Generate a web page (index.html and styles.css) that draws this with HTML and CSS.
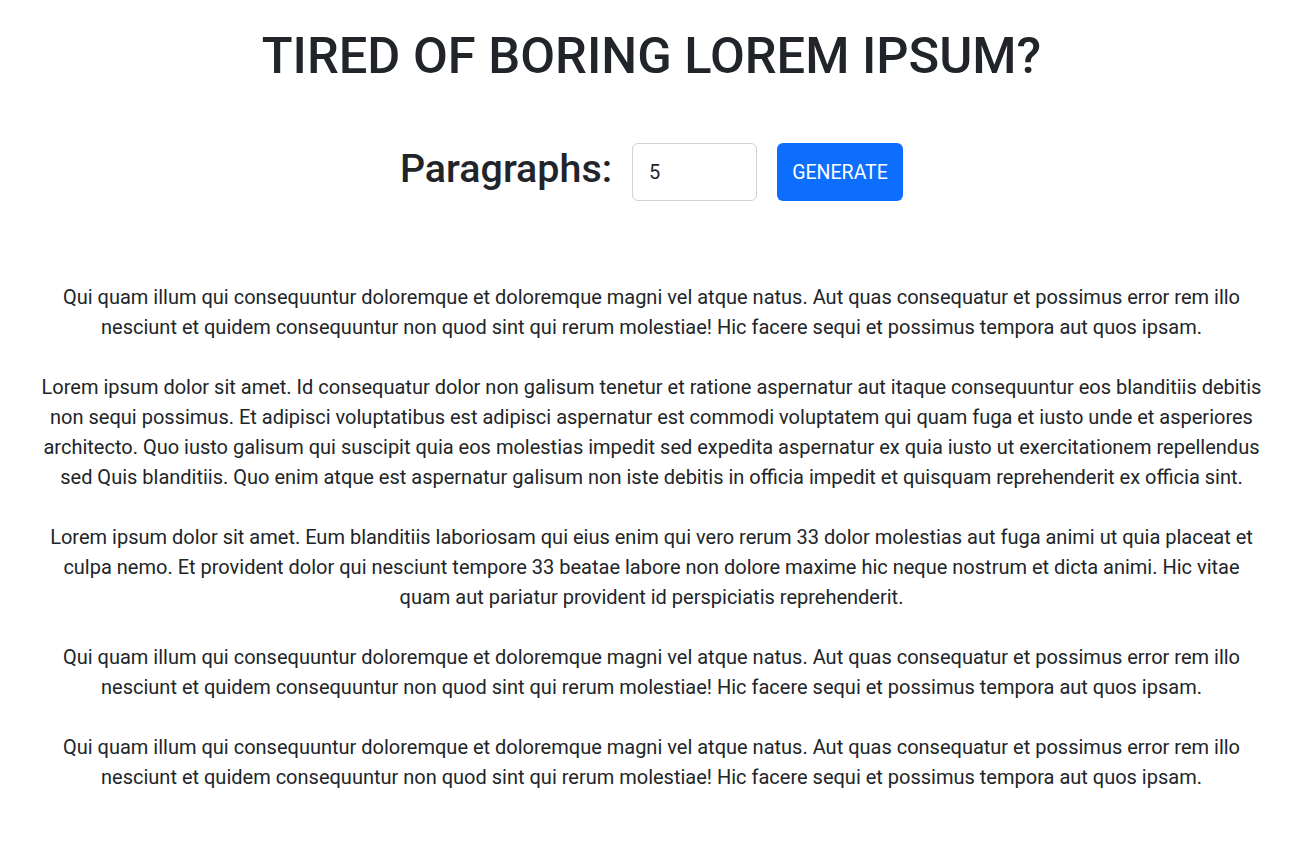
FILE: index.html
```html
<!DOCTYPE html>
<html lang="en">
<head>
<meta charset="utf-8">
<title>Lorem Ipsum Generator</title>
<link rel="stylesheet" href="styles.css">
</head>
<body>
<main class="page">
  <h1 class="title">TIRED OF BORING LOREM IPSUM?</h1>
  <form class="controls">
    <label class="controls-label" for="amount">Paragraphs:</label>
    <input class="amount-input" type="number" id="amount" name="amount" value="5">
    <button class="generate-btn" type="button">GENERATE</button>
  </form>
  <article class="lorem">
    <p>Qui quam illum qui consequuntur doloremque et doloremque magni vel atque natus. Aut quas consequatur et possimus error rem illo nesciunt et quidem consequuntur non quod sint qui rerum molestiae! Hic facere sequi et possimus tempora aut quos ipsam.</p>
    <p>Lorem ipsum dolor sit amet. Id consequatur dolor non galisum tenetur et ratione aspernatur aut itaque consequuntur eos blanditiis debitis non sequi possimus. Et adipisci voluptatibus est adipisci aspernatur est commodi voluptatem qui quam fuga et iusto unde et asperiores architecto. Quo iusto galisum qui suscipit quia eos molestias impedit sed expedita aspernatur ex quia iusto ut exercitationem repellendus sed Quis blanditiis. Quo enim atque est aspernatur galisum non iste debitis in officia impedit et quisquam reprehenderit ex officia sint.</p>
    <p>Lorem ipsum dolor sit amet. Eum blanditiis laboriosam qui eius enim qui vero rerum 33 dolor molestias aut fuga animi ut quia placeat et culpa nemo. Et provident dolor qui nesciunt tempore 33 beatae labore non dolore maxime hic neque nostrum et dicta animi. Hic vitae quam aut pariatur provident id perspiciatis reprehenderit.</p>
    <p>Qui quam illum qui consequuntur doloremque et doloremque magni vel atque natus. Aut quas consequatur et possimus error rem illo nesciunt et quidem consequuntur non quod sint qui rerum molestiae! Hic facere sequi et possimus tempora aut quos ipsam.</p>
    <p>Qui quam illum qui consequuntur doloremque et doloremque magni vel atque natus. Aut quas consequatur et possimus error rem illo nesciunt et quidem consequuntur non quod sint qui rerum molestiae! Hic facere sequi et possimus tempora aut quos ipsam.</p>
  </article>
</main>
</body>
</html>
```
FILE: styles.css
```css
* { box-sizing: border-box; }
html, body { margin: 0; padding: 0; background: #fff; }
body {
  font-family: Roboto, "Liberation Sans", sans-serif;
  color: #212529;
  font-size: 20px;
  line-height: 1.5;
}
.page {
  padding: 26px 42px 40px 40px;
  display: flex;
  flex-direction: column;
  align-items: center;
}
.title {
  margin: 0;
  font-size: 50.6px;
  font-weight: 500;
  line-height: 60px;
  text-align: center;
}
.controls {
  margin-top: 57px;
  display: flex;
  align-items: center;
  gap: 20px;
}
.controls-label {
  font-size: 39.4px;
  font-weight: 500;
  line-height: 46px;
  margin-bottom: 7px;
}
.amount-input {
  width: 125px;
  height: 58px;
  padding: 0 16px;
  border: 1px solid #ced4da;
  border-radius: 6px;
  font-family: inherit;
  font-size: 20px;
  color: #212529;
  background: #fff;
  outline: none;
  -moz-appearance: textfield;
}
.amount-input::-webkit-outer-spin-button,
.amount-input::-webkit-inner-spin-button { -webkit-appearance: none; margin: 0; }
.generate-btn {
  width: 126px;
  height: 58px;
  border: none;
  border-radius: 6px;
  background: #0d6efd;
  color: #fff;
  font-family: inherit;
  font-size: 19.5px;
  padding: 0;
  cursor: pointer;
}
.lorem {
  margin-top: 81px;
  width: 100%;
  text-align: center;
}
.lorem p {
  margin: 0 0 30px;
}
```
